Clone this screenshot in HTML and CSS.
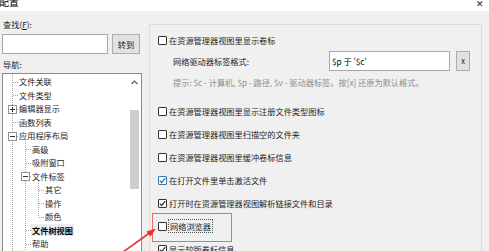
FILE: index.html
```html
<!DOCTYPE html>
<html lang="zh">
<head>
<meta charset="utf-8">
<title>配置</title>
<link rel="stylesheet" href="styles.css">
</head>
<body>
<div class="window">
  <div class="titlebar">
    <span class="title">配置</span>
    <span class="close">✕</span>
  </div>
  <div class="main">
    <div class="left">
      <div class="lbl find-lbl">查找(<u>F</u>):</div>
      <div class="find-row">
        <div class="input"></div>
        <div class="btn go">转到</div>
      </div>
      <div class="lbl nav-lbl">导航:</div>
      <div class="tree">
        <div class="tree-items">
          <svg class="tree-lines" width="125" height="200" viewBox="0 0 125 200">
            <g stroke="#a0a0a0" stroke-width="1" stroke-dasharray="1 1" fill="none">
              <line x1="9.5" y1="0" x2="9.5" y2="200"/>
              <line x1="10" y1="8.5" x2="15" y2="8.5"/>
              <line x1="10" y1="21.5" x2="15" y2="21.5"/>
              <line x1="14" y1="35.5" x2="15" y2="35.5"/>
              <line x1="10" y1="48.5" x2="15" y2="48.5"/>
              <line x1="14" y1="62.5" x2="15" y2="62.5"/>
              <line x1="22.5" y1="67" x2="22.5" y2="200"/>
              <line x1="23" y1="75.5" x2="28" y2="75.5"/>
              <line x1="23" y1="89.5" x2="28" y2="89.5"/>
              <line x1="27" y1="102.5" x2="28" y2="102.5"/>
              <line x1="23" y1="156.5" x2="28" y2="156.5"/>
              <line x1="23" y1="170.5" x2="28" y2="170.5"/>
              <line x1="35.5" y1="107" x2="35.5" y2="143"/>
              <line x1="36" y1="116.5" x2="41" y2="116.5"/>
              <line x1="36" y1="129.5" x2="41" y2="129.5"/>
              <line x1="36" y1="143.5" x2="41" y2="143.5"/>
            </g>
            <g fill="#fff" stroke="#919191" stroke-width="1">
              <rect x="5.5" y="31.5" width="8" height="8"/>
              <rect x="5.5" y="58.5" width="8" height="8"/>
              <rect x="18.5" y="98.5" width="8" height="8"/>
            </g>
            <g stroke="#333" stroke-width="1">
              <line x1="7" y1="35.5" x2="12" y2="35.5"/>
              <line x1="9.5" y1="33" x2="9.5" y2="38"/>
              <line x1="7" y1="62.5" x2="12" y2="62.5"/>
              <line x1="20" y1="102.5" x2="25" y2="102.5"/>
            </g>
          </svg>
          <div class="node l1">文件关联</div>
          <div class="node l1">文件类型</div>
          <div class="node l1">编辑器显示</div>
          <div class="node l1">函数列表</div>
          <div class="node l1">应用程序布局</div>
          <div class="node l2">高级</div>
          <div class="node l2">吸附窗口</div>
          <div class="node l2">文件标签</div>
          <div class="node l3">其它</div>
          <div class="node l3">操作</div>
          <div class="node l3">颜色</div>
          <div class="node l2 selected"><span>文件树视图</span></div>
          <div class="node l2">帮助</div>
        </div>
        <div class="vscroll">
          <svg class="up" width="7" height="5" viewBox="0 0 7 5">
            <polyline points="0.5,4 3.5,1 6.5,4" fill="none" stroke="#606060" stroke-width="1.2"/>
          </svg>
          <div class="thumb"></div>
        </div>
      </div>
    </div>

    <div class="group">
      <div class="row cb-row first">
        <span class="cb"></span><span class="cb-text">在资源管理器视图里显示卷标</span>
      </div>
      <div class="row fmt-row">
        <span class="fmt-lbl">网络驱动器标签格式:</span>
        <div class="fmt-ctrl">
          <div class="input fmt-input">$p 于 '$c'</div>
          <div class="btn xbtn">x</div>
        </div>
      </div>
      <div class="row hint">提示: $c - 计算机, $p - 路径, $v - 驱动器标签。按[x] 还原为默认格式。</div>
      <div class="checks">
        <div class="row cb-row"><span class="cb"></span><span class="cb-text">在资源管理器视图里显示注册文件类型图标</span></div>
        <div class="row cb-row"><span class="cb"></span><span class="cb-text">在资源管理器视图里扫描空的文件夹</span></div>
        <div class="row cb-row"><span class="cb"></span><span class="cb-text">在资源管理器视图里缓冲卷标信息</span></div>
        <div class="row cb-row"><span class="cb checked blue"><svg width="7" height="7" viewBox="0 0 7 7"><polyline points="0.8,3.6 2.7,5.5 6.3,1.2" fill="none" stroke="#2f6fb5" stroke-width="1.2"/></svg></span><span class="cb-text">在打开文件里单击激活文件</span></div>
        <div class="row cb-row"><span class="cb checked"><svg width="7" height="7" viewBox="0 0 7 7"><polyline points="0.8,3.6 2.7,5.5 6.3,1.2" fill="none" stroke="#333" stroke-width="1.2"/></svg></span><span class="cb-text">打开时在资源管理器视图解析链接文件和目录</span></div>
        <div class="row cb-row"><span class="cb"></span><span class="cb-text focus">网络浏览器</span></div>
        <div class="row cb-row"><span class="cb checked"><svg width="7" height="7" viewBox="0 0 7 7"><polyline points="0.8,3.6 2.7,5.5 6.3,1.2" fill="none" stroke="#333" stroke-width="1.2"/></svg></span><span class="cb-text">显示较版卷标信息</span></div>
      </div>
    </div>
    <div class="side"></div>
  </div>

  <div class="highlight"></div>
  <svg class="arrow" width="40" height="30" viewBox="0 0 40 30">
    <line x1="1" y1="29" x2="29" y2="9" stroke="#e8302c" stroke-width="1.6"/>
    <polygon points="34,5.5 24.5,8.5 28.5,13.5" fill="#e8302c"/>
  </svg>
</div>
</body>
</html>
```

FILE: styles.css
```css
* { box-sizing: border-box; }
html, body { margin: 0; padding: 0; }
body {
  width: 489px;
  height: 251px;
  overflow: hidden;
  background: #f0f0f0;
  font-family: "Noto Sans CJK SC", "Noto Sans", sans-serif;
  font-size: 8.2px;
  color: #1e1e1e;
}
.window {
  position: relative;
  width: 489px;
  height: 251px;
  overflow: hidden;
}
.titlebar {
  height: 11px;
  background: #fff;
  display: flex;
  justify-content: space-between;
  overflow: hidden;
}
.title {
  font-size: 10px;
  line-height: 10px;
  margin-top: -3px;
  margin-left: -1px;
  color: #000;
}
.close {
  font-size: 9px;
  line-height: 9px;
  margin-top: -1px;
  margin-right: 5px;
  color: #222;
}
.main {
  display: flex;
  align-items: flex-start;
}
.left {
  width: 149px;
  flex: none;
  padding-left: 2px;
  padding-top: 7px;
}
.lbl { line-height: 12px; height: 12px; padding-left: 1px; }
.find-row {
  display: flex;
  gap: 4px;
  margin-top: 4px;
}
.input {
  background: #fff;
  border: 1px solid #a8a8a8;
  height: 20px;
}
.find-row .input { width: 106px; }
.btn {
  background: #e1e1e1;
  border: 1px solid #adadad;
  height: 20px;
  display: flex;
  align-items: center;
  justify-content: center;
}
.go { width: 28px; }
.nav-lbl { margin-top: 4px; }
.tree {
  margin-top: 3px;
  width: 140px;
  height: 190px;
  background: #fff;
  border: 1px solid #8a8a8a;
  display: flex;
}
.tree-items {
  position: relative;
  flex: 1;
  padding-top: 1px;
}
.tree-lines {
  position: absolute;
  left: 0;
  top: 0;
}
.node {
  position: relative;
  height: 13.5px;
  line-height: 13.5px;
  white-space: nowrap;
}
.l1 { padding-left: 16px; }
.l2 { padding-left: 29px; }
.l3 { padding-left: 42px; }
.selected span {
  font-weight: bold;
  color: #000;
  background: #ececec;
  padding: 0 1px;
  margin-left: -1px;
}
.vscroll {
  width: 13px;
  flex: none;
  display: flex;
  flex-direction: column;
  align-items: center;
  padding-top: 6px;
}
.up { display: block; }
.thumb {
  margin-top: 25px;
  width: 9px;
  height: 79px;
  background: #cdcdcd;
}
.group {
  margin-top: 13px;
  width: 333px;
  height: 240px;
  flex: none;
  border: 1px solid #dcdcdc;
  border-bottom: none;
}
.side { flex: 1; }
.row {
  display: flex;
  align-items: center;
  white-space: nowrap;
}
.cb-row {
  height: 16px;
  padding-left: 8px;
  gap: 2px;
}
.first { margin-top: 7px; }
.cb {
  width: 9px;
  height: 9px;
  border: 1px solid #333;
  background: #fff;
  border-radius: 1px;
  display: flex;
  align-items: center;
  justify-content: center;
  flex: none;
}
.cb.blue { border-color: #3a78b8; }
.cb svg { display: block; }
.cb-text { line-height: 12px; }
.focus {
  outline: 1px dotted #555;
  outline-offset: 0;
  padding: 0 1px;
}
.fmt-row {
  margin-top: 2px;
  height: 22px;
  padding-left: 23px;
  padding-right: 11px;
  justify-content: space-between;
}
.fmt-ctrl {
  display: flex;
  align-items: center;
  gap: 6px;
}
.fmt-input {
  width: 121px;
  display: flex;
  align-items: center;
  padding-left: 2px;
  color: #000;
}
.xbtn {
  width: 14px;
  height: 20px;
  margin-top: -1px;
  font-size: 7.5px;
}
.hint {
  margin-top: 4px;
  height: 12px;
  line-height: 12px;
  padding-left: 23px;
  color: #8c8c8c;
}
.checks {
  margin-top: 15px;
  display: flex;
  flex-direction: column;
  gap: 7px;
}
.highlight {
  position: absolute;
  left: 152px;
  top: 213px;
  width: 80px;
  height: 29px;
  border: 1px solid #ec6a6a;
}
.arrow {
  position: absolute;
  left: 122px;
  top: 223px;
}
```
